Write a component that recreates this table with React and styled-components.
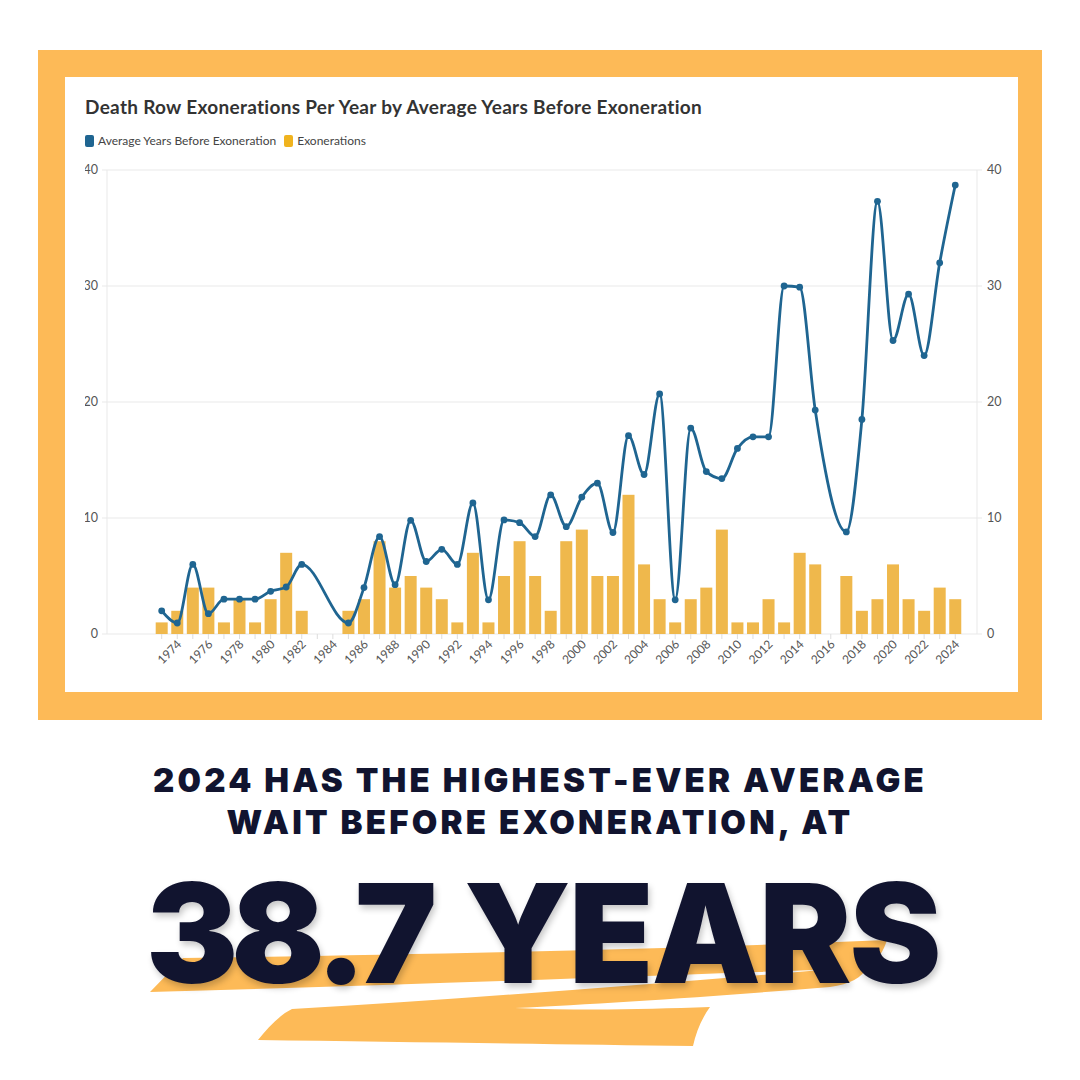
import React from 'react';
import styled, { createGlobalStyle } from 'styled-components';

const GlobalStyle = createGlobalStyle`
  html, body { margin: 0; padding: 0; background: #ffffff; }
  body { width: 1080px; height: 1080px; overflow: hidden; font-family: Lato, "Liberation Sans", sans-serif; }
`;

const ORANGE = '#FDBA57';
const BAR = '#EFB84C';
const LINE = '#1F6591';
const NAVY = '#11142F';

const Page = styled.div`
  width: 1080px;
  height: 1080px;
  box-sizing: border-box;
  padding-top: 50px;
  display: flex;
  flex-direction: column;
`;

const Frame = styled.section`
  margin-left: 38px;
  width: 1004px;
  height: 670px;
  box-sizing: border-box;
  border-style: solid;
  border-color: ${ORANGE};
  border-width: 27px 24px 28px 27px;
  background: #ffffff;
  display: flex;
`;

const Card = styled.div`
  flex: 1;
  display: flex;
  flex-direction: column;
  padding: 19px 0 0 20px;
`;

const ChartTitle = styled.h2`
  margin: 0;
  font-family: Lato, "Liberation Sans", sans-serif;
  font-weight: 700;
  font-size: 19px;
  line-height: 22px;
  letter-spacing: 0.3px;
  color: #333333;
`;

const Legend = styled.div`
  display: flex;
  gap: 8px;
  margin-top: 15px;
`;

const LegendItem = styled.div`
  display: flex;
  align-items: center;
  gap: 4px;
  font-size: 12px;
  line-height: 16px;
  color: #444444;
`;

const Swatch = styled.span`
  width: 9px;
  height: 12px;
  border-radius: 2px;
  background: ${(p) => p.$color};
`;

const ChartSvg = styled.svg`
  display: block;
  margin-top: 11px;
  font-family: Lato, "Liberation Sans", sans-serif;
`;

const Headline = styled.h1`
  margin: 39px 0 0;
  text-align: center;
  font-family: Inter, "Liberation Sans", sans-serif;
  font-weight: 900;
  font-size: 33px;
  line-height: 42px;
  letter-spacing: 3.2px;
  color: ${NAVY};
`;

const BigStat = styled.div`
  position: relative;
  margin-top: 21px;
  height: 200px;
  display: flex;
  justify-content: flex-start;
  padding-left: 146px;
`;

const Stroke = styled.svg`
  position: absolute;
  left: 0;
  top: 0;
  z-index: 0;
`;

const BigText = styled.div`
  position: relative;
  z-index: 1;
  display: flex;
  gap: ${(p) => p.$gap}px;
  font-family: Inter, "Liberation Sans", sans-serif;
  font-weight: 900;
  font-size: 138px;
  line-height: 138px;
  color: ${NAVY};
  text-shadow: 2px 4px 6px rgba(0, 0, 0, 0.22);
  white-space: nowrap;
`;

const BigWord = styled.span`
  letter-spacing: ${(p) => p.$spacing}px;
`;

const bars = [1,2,4,4,1,3,1,3,7,2, 0,0,2,3,8,4,5,4,3,1, 7,1,5,8,5,2,8,9,5,5, 12,6,3,1,3,4,9,1,1,3, 1,7,6,0,5,2,3,6,3,2, 4,3];
const avg = [2.0,0.95,6.0,1.75,3.0,3.0,3.0,3.68,4.05,6.0, null,null,0.95,4.0,8.4,4.25,9.8,6.25,7.3,6.0,
  11.3,2.95,9.83,9.6,8.4,12.0,9.25,11.8,13.0,8.75, 17.1,13.75,20.7,2.95,17.75,14.0,13.4,16.0,17.0,17.0,
  30.0,29.9,19.3,null,8.8,18.5,37.3,25.3,29.3,24.0, 32.0,38.7];

const X0 = 161.7;
const STEP = 15.56;
const Y0 = 634;
const UNIT = 11.6;
const xOf = (i) => X0 + i * STEP;
const yOf = (v) => Y0 - v * UNIT;

const sign = (v) => (v < 0 ? -1 : 1);
function slope3(p0, p1, p2) {
  const h0 = p1[0] - p0[0];
  const h1 = p2[0] - p1[0];
  const s0 = (p1[1] - p0[1]) / h0;
  const s1 = (p2[1] - p1[1]) / h1;
  const p = (s0 * h1 + s1 * h0) / (h0 + h1);
  return (sign(s0) + sign(s1)) * Math.min(Math.abs(s0), Math.abs(s1), 0.5 * Math.abs(p)) || 0;
}
function slope2(p0, p1, t) {
  const h = p1[0] - p0[0];
  return h ? (3 * (p1[1] - p0[1]) / h - t) / 2 : t;
}
function monotonePath(pts) {
  const n = pts.length;
  const t = new Array(n).fill(0);
  for (let i = 1; i < n - 1; i++) t[i] = slope3(pts[i - 1], pts[i], pts[i + 1]);
  t[0] = slope2(pts[0], pts[1], t[1]);
  t[n - 1] = slope2(pts[n - 2], pts[n - 1], t[n - 2]);
  let d = `M${pts[0][0].toFixed(2)},${pts[0][1].toFixed(2)}`;
  for (let i = 0; i < n - 1; i++) {
    const [x0, y0] = pts[i];
    const [x1, y1] = pts[i + 1];
    const dx = (x1 - x0) / 3;
    d += ` C${(x0 + dx).toFixed(2)},${(y0 + dx * t[i]).toFixed(2)} ${(x1 - dx).toFixed(2)},${(y1 - dx * t[i + 1]).toFixed(2)} ${x1.toFixed(2)},${y1.toFixed(2)}`;
  }
  return d;
}

const linePts = avg.map((v, i) => (v == null ? null : [xOf(i), yOf(v)])).filter(Boolean);
const ticks = [0, 10, 20, 30, 40];
const PLOT_L = 107;
const PLOT_R = 977;

function Chart() {
  return (
    <ChartSvg width="933" height="532" viewBox="85 160 933 532">
      {ticks.map((v) => (
        <g key={v}>
          <line x1={PLOT_L - 5} x2={PLOT_R + 5} y1={yOf(v)} y2={yOf(v)} stroke="#E9E9E9" strokeWidth="1" />
          <text x={98} y={yOf(v)} dy="0.35em" textAnchor="end" fontSize="12.5" fill="#555">{v}</text>
          <text x={987} y={yOf(v)} dy="0.35em" textAnchor="start" fontSize="12.5" fill="#555">{v}</text>
        </g>
      ))}
      <line x1={PLOT_L} x2={PLOT_L} y1={yOf(40)} y2={Y0} stroke="#E9E9E9" strokeWidth="1" />
      <line x1={PLOT_R} x2={PLOT_R} y1={yOf(40)} y2={Y0} stroke="#E9E9E9" strokeWidth="1" />
      {bars.map((b, i) => (
        <g key={i}>
          <line x1={xOf(i)} x2={xOf(i)} y1={Y0} y2={Y0 + 5} stroke="#DDDDDD" strokeWidth="1" />
          {b > 0 && <rect x={xOf(i) - 6} y={yOf(b)} width="12" height={b * UNIT} fill={BAR} />}
        </g>
      ))}
      {bars.map((_, i) => {
        const yr = 1973 + i;
        if (yr % 2 !== 0) return null;
        return (
          <text key={yr} transform={`translate(${xOf(i) + 5},${645}) rotate(-45)`} textAnchor="end" fontSize="12" fill="#555">
            {yr}
          </text>
        );
      })}
      <path d={monotonePath(linePts)} fill="none" stroke={LINE} strokeWidth="2.8" strokeLinejoin="round" />
      {linePts.map(([x, y], i) => (
        <circle key={i} cx={x} cy={y} r="3.4" fill={LINE} />
      ))}
    </ChartSvg>
  );
}

export default function App() {
  return (
    <>
      <GlobalStyle />
      <Page>
        <Frame>
          <Card>
            <ChartTitle>Death Row Exonerations Per Year by Average Years Before Exoneration</ChartTitle>
            <Legend>
              <LegendItem><Swatch $color={LINE} />Average Years Before Exoneration</LegendItem>
              <LegendItem><Swatch $color="#F0B31E" />Exonerations</LegendItem>
            </Legend>
            <Chart />
          </Card>
        </Frame>
        <Headline>
          2024 HAS THE HIGHEST-EVER AVERAGE
          <br />
          WAIT BEFORE EXONERATION, AT
        </Headline>
        <BigStat>
          <Stroke width="1080" height="200" viewBox="0 864 1080 200">
            <path
              fill={ORANGE}
              d="M150,992 L183,958 C400,955 650,950 887,940 C884,950 878,960 868,968 C650,976 400,985 150,992 Z
                 M868,966 C862,978 850,984 830,987 C720,996 600,1004 515,1008 C590,1011 650,1009 710,1007
                 C702,1018 696,1032 693,1046 C560,1044 400,1042 258,1040 C268,1028 278,1016 292,1009
                 C480,998 680,982 868,966 Z"
            />
          </Stroke>
          <BigText $gap={34}>
            <BigWord $spacing={-7}>38.7</BigWord>
            <BigWord $spacing={-2}>YEARS</BigWord>
          </BigText>
        </BigStat>
      </Page>
    </>
  );
}
